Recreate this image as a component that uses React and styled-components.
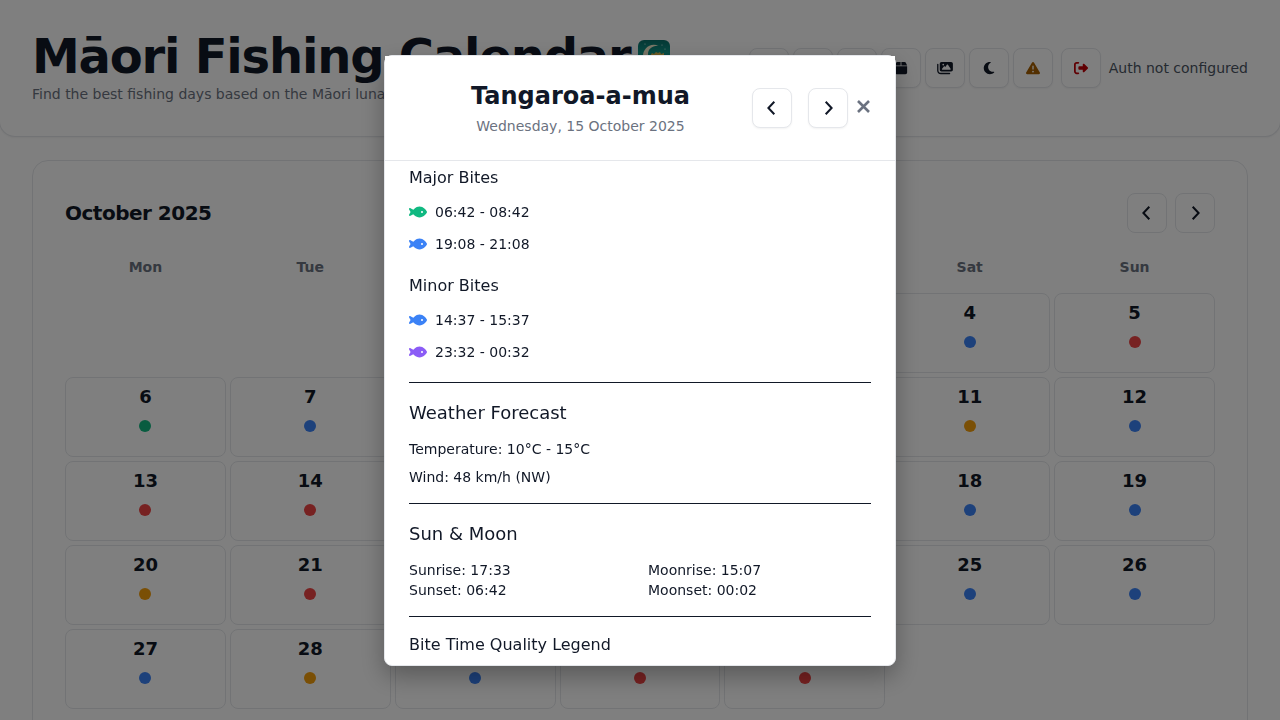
import React from "react";
import styled, { createGlobalStyle, css } from "styled-components";
import {
  FaBox,
  FaImages,
  FaMoon,
  FaTriangleExclamation,
  FaRightFromBracket,
  FaFish,
  FaGear,
  FaChartLine,
  FaMagnifyingGlass,
} from "react-icons/fa6";

const GlobalStyle = createGlobalStyle`
  *, *::before, *::after { box-sizing: border-box; }
  html, body { height: 100%; }
  body {
    margin: 0;
    overflow: hidden;
    background: #fff;
    color: #111827;
    font-family: "DejaVu Sans", sans-serif;
    font-size: 14px;
    line-height: 20px;
  }
  h1, h2, h3, h4, p, ul { margin: 0; padding: 0; font-weight: 400; }
  button { font: inherit; color: inherit; padding: 0; cursor: pointer; }
`;

const Header = styled.header`
  display: flex;
  align-items: flex-start;
  justify-content: space-between;
  margin: 0 -1px;
  padding: 32px;
  background: #fff;
  border: 1px solid #e5e7eb;
  border-top: 0;
  border-radius: 0 0 16px 16px;
  box-shadow: 0 1px 2px rgba(0, 0, 0, 0.05);
`;

const Title = styled.h1`
  display: flex;
  align-items: center;
  font-size: 48px;
  line-height: 48px;
  font-weight: 700;
  letter-spacing: -0.025em;
  white-space: nowrap;
`;

const Logo = styled.svg`
  width: 32px;
  height: 32px;
  margin-left: 8px;
`;

const Tagline = styled.p`
  margin-top: 4px;
  color: #6b7280;
  white-space: nowrap;
`;

const Toolbar = styled.nav`
  display: flex;
  align-items: center;
  gap: 4px;
  padding-top: 16px;
`;

const Account = styled.div`
  display: flex;
  align-items: center;
  gap: 8px;
  margin-left: 4px;
  color: #4b5563;
  white-space: nowrap;
`;

const SquareButton = styled.button`
  display: flex;
  flex: none;
  align-items: center;
  justify-content: center;
  width: 40px;
  height: 40px;
  border: 1px solid #e5e7eb;
  border-radius: 8px;
  background: #fff;
  color: ${(p) => p.$color || "#111827"};
  ${(p) =>
    p.$raised &&
    css`
      box-shadow: 0 1px 2px rgba(0, 0, 0, 0.05);
    `}
`;

const ToolButton = styled(SquareButton)`
  svg {
    width: 16px;
    height: 14px;
  }
`;

const Calendar = styled.section`
  margin: 23px 32px;
  padding: 32px;
  border: 1px solid #e5e7eb;
  border-radius: 16px;
  background: #fff;
`;

const CalendarHead = styled.div`
  display: flex;
  align-items: center;
  justify-content: space-between;
`;

const Month = styled.h2`
  font-size: 20px;
  line-height: 28px;
  font-weight: 700;
  letter-spacing: -0.025em;
`;

const ButtonPair = styled.div`
  display: flex;
  gap: ${(p) => p.$gap}px;
`;

const Grid = styled.div`
  display: grid;
  grid-template-columns: repeat(7, minmax(0, 1fr));
  gap: 4px;
`;

const Weekdays = styled(Grid)`
  margin: 24px 0 16px;
  color: #6b7280;
  font-weight: 700;
  text-align: center;
`;

const Day = styled.button`
  display: flex;
  flex-direction: column;
  align-items: center;
  gap: 9px;
  height: 80px;
  padding-top: 5px;
  border: 1px solid #e5e7eb;
  border-radius: 8px;
  background: #fff;
  font-size: 18px;
  line-height: 28px;
  font-weight: 700;
  grid-column-start: ${(p) => p.$start || "auto"};
`;

const Dot = styled.span`
  width: 12px;
  height: 12px;
  border-radius: 50%;
  background: ${(p) => p.$color};
`;

const Overlay = styled.div`
  position: fixed;
  inset: 0;
  display: flex;
  align-items: center;
  justify-content: center;
  padding-top: 1px;
  background: rgba(0, 0, 0, 0.5);
`;

const Dialog = styled.div`
  display: flex;
  flex-direction: column;
  width: 100%;
  max-width: 512px;
  max-height: calc(85vh - 1px);
  border: 1px solid #e5e7eb;
  border-radius: 8px;
  background: #fff;
  box-shadow: 0 10px 25px rgba(0, 0, 0, 0.3);
`;

const DialogHead = styled.header`
  display: flex;
  align-items: flex-start;
  flex: none;
  padding: 24px;
  background: #fff;
  border-bottom: 1px solid #e5e7eb;
`;

const DialogTitle = styled.div`
  flex: 1;
  text-align: center;
`;

const DialogName = styled.h2`
  font-size: 24px;
  line-height: 32px;
  font-weight: 700;
`;

const DialogDate = styled.p`
  margin-top: 4px;
  color: #6b7280;
`;

const DialogNav = styled.div`
  display: flex;
  padding-top: 8px;
`;

const CloseButton = styled.button`
  display: flex;
  align-items: center;
  height: 36px;
  margin-left: 8px;
  border: 0;
  background: none;
  color: #6b7280;
`;

const DialogBody = styled.div`
  min-height: 0;
  overflow: hidden;
  padding: 5px 24px 0;
`;

const Block = styled.section`
  padding-bottom: 16px;
  margin-bottom: 16px;
  border-bottom: 1px solid #111827;
`;

const SectionTitle = styled.h3`
  margin-bottom: 12px;
  font-size: 18px;
  line-height: 28px;
`;

const SubTitle = styled.h4`
  margin-bottom: 8px;
  font-size: 16px;
  line-height: 24px;
`;

const BiteList = styled.ul`
  display: flex;
  flex-direction: column;
  gap: 4px;
  list-style: none;

  & + h4 {
    margin-top: 16px;
  }
`;

const Bite = styled.li`
  display: flex;
  align-items: center;
  gap: 8px;
  height: 28px;

  svg {
    width: 18px;
    height: 16px;
    color: ${(p) => p.$color};
  }
`;

const Line = styled.p`
  & + & {
    margin-top: 8px;
  }
`;

const Times = styled.div`
  display: grid;
  grid-template-columns: 1fr 1fr;
  column-gap: 16px;
`;

const BLUE = "#3b82f6";
const RED = "#ef4444";
const GREEN = "#10b981";
const AMBER = "#f59e0b";
const PURPLE = "#8b5cf6";

const dayColors = [
  BLUE, AMBER, BLUE, BLUE, RED,
  GREEN, BLUE, BLUE, BLUE, AMBER, AMBER, BLUE,
  RED, RED, BLUE, GREEN, GREEN, BLUE, BLUE,
  AMBER, RED, RED, BLUE, BLUE, BLUE, BLUE,
  BLUE, AMBER, BLUE, RED, RED,
];

const weekdays = ["Mon", "Tue", "Wed", "Thu", "Fri", "Sat", "Sun"];

const tools = [
  { label: "Search", Icon: FaMagnifyingGlass },
  { label: "Analytics", Icon: FaChartLine },
  { label: "Settings", Icon: FaGear },
  { label: "Tackle box", Icon: FaBox },
  { label: "Gallery", Icon: FaImages },
  { label: "Dark mode", Icon: FaMoon },
  { label: "Warnings", Icon: FaTriangleExclamation, color: "#a65f00" },
];

const majorBites = [
  { time: "06:42 - 08:42", color: GREEN },
  { time: "19:08 - 21:08", color: BLUE },
];

const minorBites = [
  { time: "14:37 - 15:37", color: BLUE },
  { time: "23:32 - 00:32", color: PURPLE },
];

function Chevron({ right }) {
  return (
    <svg width="24" height="24" viewBox="0 0 24 24" fill="none" stroke="currentColor" strokeWidth="2" aria-hidden="true">
      <path d={right ? "M9.7 5.7l5.9 6.3-5.9 6.3" : "M14.3 5.7L8.4 12l5.9 6.3"} />
    </svg>
  );
}

function AppLogo() {
  return (
    <Logo viewBox="0 0 32 32" aria-hidden="true">
      <defs>
        <linearGradient id="sea" x1="0" y1="0" x2="0" y2="1">
          <stop offset="0" stopColor="#0b6f69" />
          <stop offset="0.4" stopColor="#10998a" />
          <stop offset="1" stopColor="#0c6470" />
        </linearGradient>
      </defs>
      <rect width="32" height="32" rx="6" fill="url(#sea)" />
      <path d="M21 6C12 2 5 9 5 16s6 11 12 11c4 0 7-2 9-5-9 3-16-1-16-8 0-5 5-9 11-8z" fill="#f5efd0" />
      <path d="M12 16l2-3 2 1 2-2 2 1 2-1 1 2 3-1v7l-3-2c-4 3-8 2-11-2z" fill="#e0b94c" />
      <circle cx="7" cy="4" r="0.6" fill="#d7efe9" />
      <circle cx="24" cy="5" r="0.6" fill="#d7efe9" />
      <circle cx="27" cy="9" r="0.6" fill="#d7efe9" />
    </Logo>
  );
}

function BiteGroup({ title, bites }) {
  return (
    <>
      <SubTitle>{title}</SubTitle>
      <BiteList>
        {bites.map((b) => (
          <Bite key={b.time} $color={b.color}>
            <FaFish aria-hidden="true" />
            {b.time}
          </Bite>
        ))}
      </BiteList>
    </>
  );
}

export default function App() {
  return (
    <>
      <GlobalStyle />
      <Header>
        <div>
          <Title>
            Māori Fishing Calendar
            <AppLogo />
          </Title>
          <Tagline>Find the best fishing days based on the Māori lunar calendar</Tagline>
        </div>
        <Toolbar aria-label="Tools">
          {tools.map(({ label, Icon, color }) => (
            <ToolButton key={label} type="button" aria-label={label} $color={color} $raised>
              <Icon />
            </ToolButton>
          ))}
          <Account>
            <ToolButton type="button" aria-label="Sign out" $color="#c10007" $raised>
              <FaRightFromBracket />
            </ToolButton>
            Auth not configured
          </Account>
        </Toolbar>
      </Header>

      <main>
        <Calendar>
          <CalendarHead>
            <Month>October 2025</Month>
            <ButtonPair $gap={8}>
              <SquareButton type="button" aria-label="Previous month">
                <Chevron />
              </SquareButton>
              <SquareButton type="button" aria-label="Next month">
                <Chevron right />
              </SquareButton>
            </ButtonPair>
          </CalendarHead>
          <Weekdays>
            {weekdays.map((d) => (
              <span key={d}>{d}</span>
            ))}
          </Weekdays>
          <Grid>
            {dayColors.map((color, i) => (
              <Day key={i} type="button" $start={i === 0 ? 3 : undefined}>
                {i + 1}
                <Dot $color={color} />
              </Day>
            ))}
          </Grid>
        </Calendar>
      </main>

      <Overlay>
        <Dialog role="dialog" aria-modal="true" aria-labelledby="lunar-day">
          <DialogHead>
            <DialogTitle>
              <DialogName id="lunar-day">Tangaroa-a-mua</DialogName>
              <DialogDate>Wednesday, 15 October 2025</DialogDate>
            </DialogTitle>
            <DialogNav>
              <ButtonPair $gap={16}>
                <SquareButton type="button" aria-label="Previous day" $raised>
                  <Chevron />
                </SquareButton>
                <SquareButton type="button" aria-label="Next day" $raised>
                  <Chevron right />
                </SquareButton>
              </ButtonPair>
              <CloseButton type="button" aria-label="Close">
                <svg width="15" height="15" viewBox="0 0 15 15" stroke="currentColor" strokeWidth="2.6" aria-hidden="true">
                  <path d="M2 2l11 11M13 2L2 13" />
                </svg>
              </CloseButton>
            </DialogNav>
          </DialogHead>
          <DialogBody>
            <Block>
              <BiteGroup title="Major Bites" bites={majorBites} />
              <BiteGroup title="Minor Bites" bites={minorBites} />
            </Block>
            <Block>
              <SectionTitle>Weather Forecast</SectionTitle>
              <Line>Temperature: 10°C - 15°C</Line>
              <Line>Wind: 48 km/h (NW)</Line>
            </Block>
            <Block>
              <SectionTitle>Sun &amp; Moon</SectionTitle>
              <Times>
                <span>Sunrise: 17:33</span>
                <span>Moonrise: 15:07</span>
                <span>Sunset: 06:42</span>
                <span>Moonset: 00:02</span>
              </Times>
            </Block>
            <SubTitle>Bite Time Quality Legend</SubTitle>
          </DialogBody>
        </Dialog>
      </Overlay>
    </>
  );
}
